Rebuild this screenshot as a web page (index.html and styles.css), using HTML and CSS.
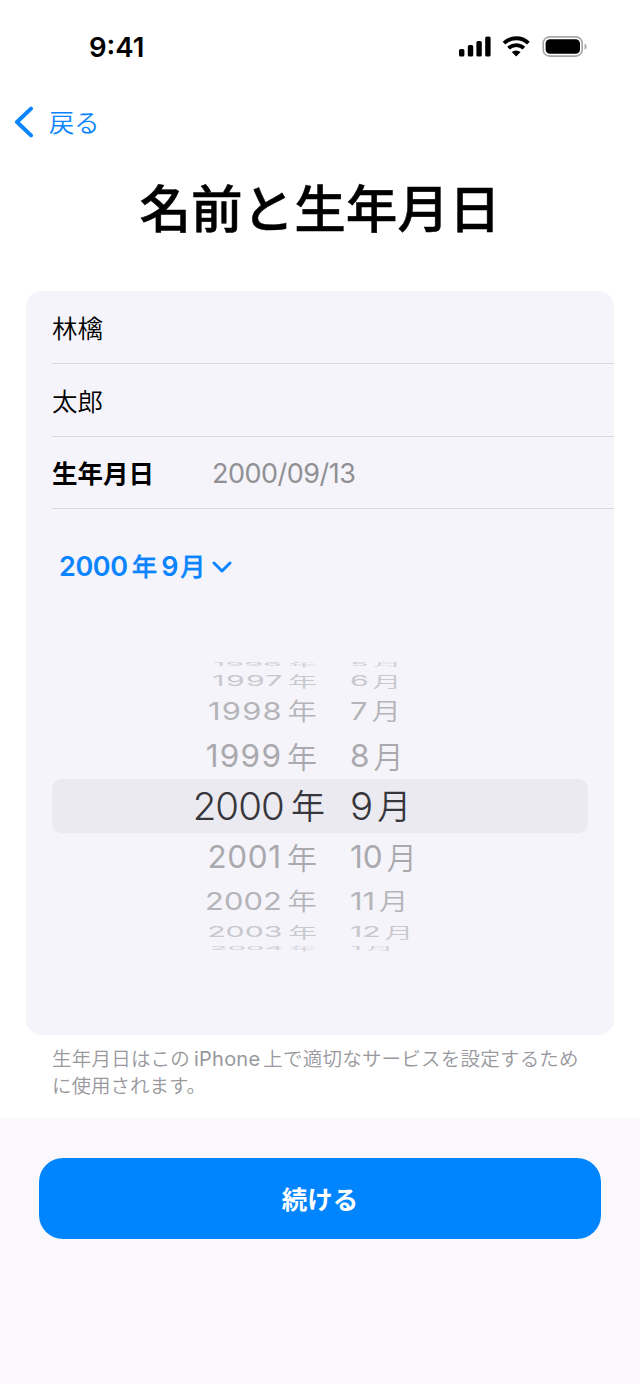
FILE: index.html
```html
<!DOCTYPE html>
<html lang="ja">
<head>
<meta charset="utf-8">
<title>名前と生年月日</title>
<link rel="stylesheet" href="styles.css">
</head>
<body>
<div class="screen">
  <header class="status">
    <span class="time">9:41</span>
    <svg class="status-icons" width="130" height="24" viewBox="0 0 130 24">
      <rect x="1" y="13" width="5.4" height="7.6" rx="1.6"/>
      <rect x="9.8" y="9" width="5.4" height="11.6" rx="1.6"/>
      <rect x="18.4" y="5" width="5.4" height="15.6" rx="1.6"/>
      <rect x="27.2" y="0.4" width="5.4" height="20.2" rx="1.6"/>
      <g fill="none" stroke="#000" stroke-width="3.9">
        <path d="M46 7.1a17.8 17.8 0 0 1 24.4 0"/>
        <path d="M50.5 12.2a11.2 11.2 0 0 1 15.4 0"/>
      </g>
      <path d="M58.2 20.6l4.4-4.5a6.6 6.6 0 0 0-8.8 0z"/>
      <rect x="85.2" y="0.9" width="39" height="19.2" rx="6.4" fill="none" stroke="#a6a6a6" stroke-width="1.6"/>
      <rect x="87.6" y="3.2" width="34.4" height="14.6" rx="4.4"/>
      <path d="M126.6 7.4c2.6 1 2.6 5.2 0 6.2z" fill="#a6a6a6"/>
    </svg>
  </header>
  <nav class="nav">
    <svg width="20" height="32" viewBox="0 0 20 32"><path d="M17 2.6L3 16l14 13.4" fill="none" stroke="#0a84ff" stroke-width="4" stroke-linecap="round" stroke-linejoin="round"/></svg>
    <span>戻る</span>
  </nav>
  <h1 class="title">名前と生年月日</h1>
  <section class="card">
    <div class="field">林檎</div>
    <div class="field">太郎</div>
    <div class="field field-date"><b>生年月日</b><span class="date">2000/09/13</span></div>
    <div class="month-toggle"><span class="latin">2000</span><span>年</span><span class="latin nine">9</span><span>月</span>
      <svg width="20" height="13" viewBox="0 0 20 13"><path d="M2 2l8 8 8-8" fill="none" stroke="#0a84ff" stroke-width="3" stroke-linecap="round" stroke-linejoin="round"/></svg>
    </div>
    <div class="picker">
      <div class="row far-top"><div class="year"><i>1996</i><em>年</em></div><div class="month"><i>5</i><em>月</em></div></div>
      <div class="row top3"><div class="year"><i>1997</i><em>年</em></div><div class="month"><i>6</i><em>月</em></div></div>
      <div class="row top2"><div class="year"><i>1998</i><em>年</em></div><div class="month"><i>7</i><em>月</em></div></div>
      <div class="row top1"><div class="year"><i>1999</i><em>年</em></div><div class="month"><i>8</i><em>月</em></div></div>
      <div class="row selected"><div class="year"><i>2000</i><em>年</em></div><div class="month"><i>9</i><em>月</em></div></div>
      <div class="row bottom1"><div class="year"><i>2001</i><em>年</em></div><div class="month"><i>10</i><em>月</em></div></div>
      <div class="row bottom2"><div class="year"><i>2002</i><em>年</em></div><div class="month"><i>11</i><em>月</em></div></div>
      <div class="row bottom3"><div class="year"><i>2003</i><em>年</em></div><div class="month"><i>12</i><em>月</em></div></div>
      <div class="row far-bottom"><div class="year"><i>2004</i><em>年</em></div><div class="month"><i>1</i><em>月</em></div></div>
    </div>
  </section>
  <p class="note"><span class="first-line">生年月日はこの<span class="latin">iPhone</span>上で適切なサービスを設定するため</span><br>に使用されます。</p>
  <footer class="footer"><button class="continue">続ける</button></footer>
</div>
</body>
</html>
```

FILE: styles.css
```css
* { box-sizing: border-box; }
body { margin: 0; background: #fff; }
.screen {
  width: 640px; height: 1384px; overflow: hidden;
  display: flex; flex-direction: column;
  font-family: "Noto Sans CJK JP", sans-serif;
  color: #000; background: #fff;
}
.status {
  height: 92px; padding: 0 52px 0 89px;
  display: flex; align-items: center; justify-content: space-between;
}
.time { font: 600 27.5px/32px Inter, sans-serif; padding-top: 1px; }
.status-icons { margin-top: 3px; }
.nav {
  height: 60px; padding-left: 14px; color: #0a84ff;
  display: flex; align-items: center; gap: 15px;
  font-size: 25.2px; font-weight: 350; line-height: 36px;
}
.nav span { padding-bottom: 3px; }
.title {
  margin: 0; height: 139px; padding-top: 14px;
  text-align: center; font-size: 51.6px; line-height: 80px; font-weight: 500;
  -webkit-text-stroke: .5px #000;
}
.card {
  margin: 0 26px; height: 744px; flex: none;
  background: #f5f4fa; border-radius: 16px; overflow: hidden;
}
.field {
  height: 73px; margin-left: 26px; padding-bottom: 2px; border-bottom: 1px solid #d9d8de;
  display: flex; align-items: center;
  font-size: 25.5px; font-weight: 350;
}
.field-date { height: 72px; padding-bottom: 1px; }
.field b { font-weight: 700; width: 160px; padding-bottom: 2px; }
.date { font: 400 27px/36px Inter, sans-serif; color: #909095; letter-spacing: -.5px; padding-top: 3px; }
.latin { font-family: Inter, sans-serif; }
.month-toggle {
  height: 114px; padding-left: 33px;
  display: flex; align-items: center;
  color: #0a84ff; font-size: 25.5px; font-weight: 500;
}
.month-toggle > span:not(.latin) { padding-bottom: 4px; -webkit-text-stroke: .3px #0a84ff; }
.month-toggle .latin { font-size: 27px; font-weight: 600; letter-spacing: -.4px; margin-right: 4px; }
.month-toggle .nine { margin: 0 2px 0 4px; }
.month-toggle svg { margin: 2px 0 0 6px; }
.picker { padding: 33px 26px 0; }
.row {
  display: grid; grid-template-columns: 265px 1fr; grid-template-rows: 100%; column-gap: 33px;
  color: #a9a9ae; font-size: 31.5px; line-height: 34px;
}
.row i, .row em { font-style: normal; }
.row i { font-family: Inter, sans-serif; font-weight: 400; }
.row em { font-size: 30px; font-weight: 350; padding-bottom: 3px; }
.year, .month { display: flex; align-items: center; gap: 4px; height: 100%; }
.year { justify-content: flex-end; gap: 6px; transform-origin: 100% 50%; }
.month { transform-origin: 0 50%; }
.far-top { height: 16px; color: #d0d0d5; }
.far-top > div { transform: scale(.97, .17); }
.top3 { height: 18px; color: #c8c8cd; }
.top3 > div { transform: scale(.96, .48); }
.top2 { height: 43px; color: #b4b4b9; }
.top2 > div { transform: scale(.98, .78); }
.top1 { height: 46px; }
.top1 .year i, .top2 .year i, .top3 .year i { letter-spacing: 1.3px; margin-right: -1.3px; }
.bottom1 .year i { letter-spacing: .6px; margin-right: -.6px; }
.selected {
  height: 54px; background: #ebeaf0; border-radius: 10px;
  color: #37373b; font-size: 38.5px; grid-template-columns: 273px 1fr; column-gap: 25px;
}
.selected i { font-weight: 350; }
.selected .year i { letter-spacing: -.9px; margin-right: 1px; }
.selected em { font-size: 34px; padding-bottom: 2px; }
.bottom1 { height: 48px; }
.bottom2 { height: 40px; color: #b4b4b9; }
.bottom2 > div { transform: scale(.98, .78); }
.bottom3 { height: 22px; color: #c8c8cd; }
.bottom3 > div { transform: scale(.96, .48); }
.far-bottom { height: 10px; color: #d0d0d5; }
.far-bottom > div { transform: scale(.93, .17); }
.note {
  margin: 0; height: 83px; flex: none; padding: 10px 0 0 52px;
  font-size: 19.5px; line-height: 26px; font-weight: 350; color: #98989d; white-space: nowrap;
}
.first-line { letter-spacing: .22px; }
.note .latin { font-size: 20px; font-weight: 400; margin: 0 3px 0 4px; }
.footer { flex: 1; background: #faf8fc; padding: 40px 39px 0; }
.continue {
  display: block; width: 562px; height: 81px; border: 0; border-radius: 24px;
  background: #0085ff; color: #fff; padding: 0 0 3px;
  font-family: "Noto Sans CJK JP", sans-serif; font-size: 25.5px; font-weight: 700;
}
```
